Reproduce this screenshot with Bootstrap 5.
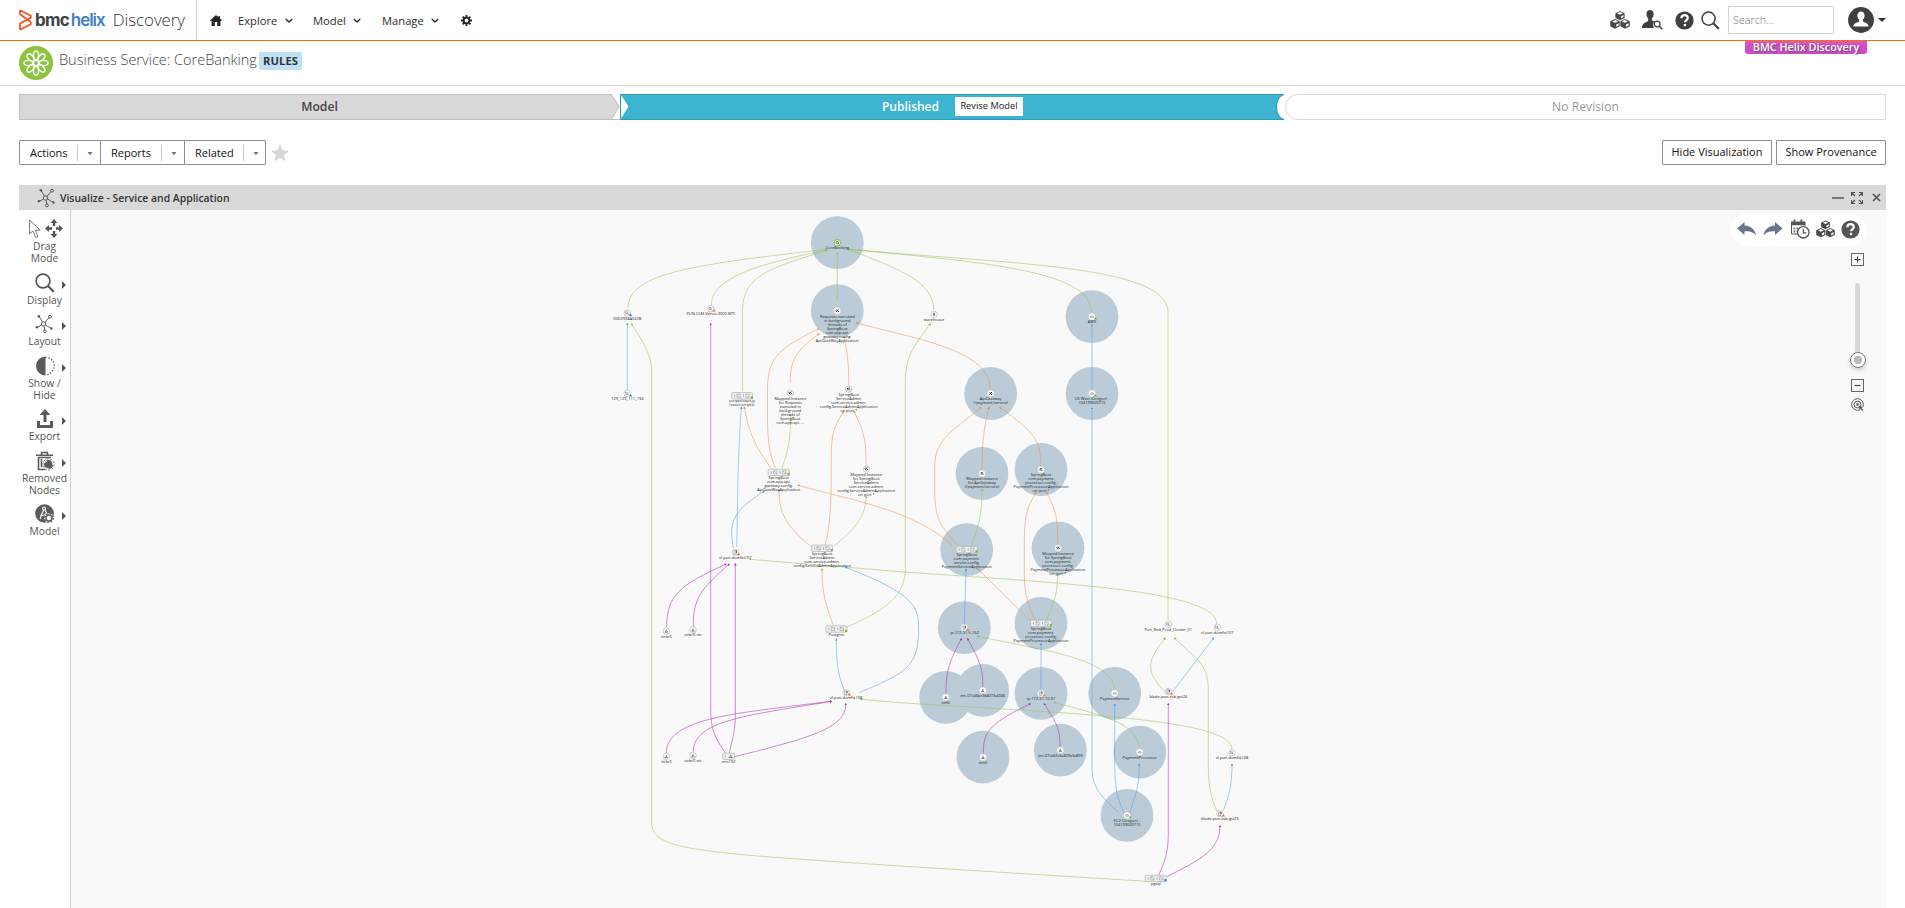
<!DOCTYPE html>
<html lang="en">
<head>
<meta charset="utf-8">
<title>BMC Helix Discovery</title>
<link href="https://cdn.jsdelivr.net/npm/bootstrap@5.3.0/dist/css/bootstrap.min.css" rel="stylesheet">
<style>
body{font-family:"Open Sans","Noto Sans",sans-serif;font-size:11.2px;line-height:1.5;color:#2d2d2d;background:#fff;height:908px;overflow:hidden}
svg{display:block;flex:none}
.topbar{height:41px;border-bottom:1px solid #f2700f}
.brand{width:197px;height:40px;padding-left:19px;border-right:1px solid #d5d5d5}
.logo-a{font:700 17px/24px "Inter","Open Sans",sans-serif;letter-spacing:-.8px;color:#414042;margin-left:2px}
.logo-b{font:600 17px/24px "Inter","Open Sans",sans-serif;letter-spacing:-1.05px;color:#4480c4;margin-left:2px}
.logo-c{font-weight:300;font-size:16.8px;line-height:24px;color:#333;margin-left:8px}
.menu-item{height:40px;padding-top:2px}
.search-box{width:106px;height:28px;border:1px solid #d5d5d5;border-radius:1px;font-size:10.800px;font-weight:300;color:#777;padding:0 4px}
.titlebar{height:45px;border-bottom:1px solid #d9d9d9;padding:5px 19px 0}
.page-title{font-size:14.5px;font-weight:300;line-height:20px;width:198px;white-space:nowrap;color:#444;margin:4px 0 0 6px}
.rule-tag{background:#bfe0f5;color:#333;font-weight:700;font-size:11.300px;line-height:18px;height:18px;width:43px;border-radius:2px;margin:6px 0 0 2px;text-align:center}
.env-tag{right:38px;top:41px;width:122px;height:13px;background:linear-gradient(#e05fae,#d24bcb 35%);color:#fff;font-weight:600;font-size:10.800px;line-height:12px;border-radius:0 0 3px 3px;text-shadow:1px 1px 2px #555}
.stages{margin:8px 19px 0;height:26px}
.stage-model{width:601px;font-size:12.200px;font-weight:600;color:#444}
.stage-pub{width:665px;font-size:12px;font-weight:600;color:#fff;gap:16px}
.stage-none{flex:1;border:1px solid #d9d9d9;border-radius:14px 0 0 14px;color:#999;font-size:12.200px}
.revise{background:#fff;color:#222;font-size:9.300px;font-weight:400;line-height:18px;height:19px;width:68px;top:-.5px;border-radius:1px;text-align:center}
.actions{margin:20px 19px 0;height:25px}
.tool-btn{height:25px;border:1px solid #8c8c8c;border-radius:1px;background:#fff;color:#111;font-size:11px;line-height:22px}
.split{border-left:1px solid #c4c4c4;width:24px;height:16px;margin-right:-5px;padding:2px 0 0 9px}
.drop-btn{padding:0 0 0 10px}
.panel-head{margin:20px 19px 0;height:25px;background:#d9d9d9;font-size:10.400px;font-weight:600;color:#333;padding:0 5px 0 18px}
.panel-main{margin:0 19px;height:698px}
.sidebar{width:52px;border-right:1px solid #d0d0d0;padding-top:9px;gap:8.5px}
.side-item{width:51px;text-align:center;font-size:10.300px;line-height:12px;color:#555;white-space:nowrap}
.side-icon{height:21px;position:relative}
.side-icon .fly{position:absolute;right:4px;top:8px}
.canvas{background:#f9f9f9;flex:1}
.node-text{font-family:"Open Sans","Noto Sans",sans-serif;font-size:3.95px;fill:#222;text-anchor:middle}
.tool-pill{right:19px;top:4px;width:136px;height:32px;border-radius:16px;background:#fff}
.zoom-col{right:20px;top:43px;width:17px}
.zoom-box{width:13px;height:13px;border:1px solid #666}
.zoom-track{width:5px;height:70px;border-radius:3px;background:#d9d9d9;margin-top:17px}
.zoom-knob{width:16px;height:16px;border:1px solid #70758a;border-radius:50%;background:radial-gradient(circle,#bbb 0 4px,#fff 4.5px);margin-top:-1px;box-shadow:0 2px 4px #ccc}
</style>
</head>
<body>
<svg width="0" height="0" class="position-absolute">
  <symbol id="i-cubes" viewBox="0 0 20 18"><g fill="#4a4a4a"><path d="M10 0l4.600 2.200v4.800L10 9.300 5.400 7V2.200z"/><path d="M5 8l4.700 2.200v5L5 17.800.2 15.200v-5z"/><path d="M15 8l4.800 2.200v5L15 17.800l-4.700-2.600v-5z"/></g><path d="M10 1l3 1.300L10 3.700 7 2.300zM5.200 9.100l3 1.300-3 1.400-3-1.400zM14.800 9.100l3 1.300-3 1.400-3-1.400zM11 5.200l2.500-1.200v2l-2.500 1.300zM6.200 13.400l2.500-1.200v2.200l-2.500 1.400zM16 13.400l2.500-1.200v2.200L16 15.800z" fill="#fff"/></symbol>
  <symbol id="i-help" viewBox="0 0 20 20"><circle cx="10" cy="10" r="9.600" fill="currentColor"/><path d="M6.700 7.600C6.800 5.400 8 4.400 10 4.400s3.400 1.100 3.400 2.900c0 2.400-2.800 2.500-2.800 4.500" fill="none" stroke="#fff" stroke-width="2.300"/><circle cx="10.500" cy="14.800" r="1.400" fill="#fff"/></symbol>
  <symbol id="i-search" viewBox="0 0 20 20"><circle cx="8" cy="8" r="6.900" fill="none" stroke="currentColor" stroke-width="1.600"/><path d="M12.800 12.800l6 6" stroke="currentColor" stroke-width="2.200"/></symbol>
  <symbol id="i-graph" viewBox="0 0 20 20"><g fill="none" stroke="currentColor" stroke-width="1"><circle cx="9" cy="10" r="2.300"/><path d="M4.500 2.500L8 8M10.500 8.300l4.300-5M6.800 11.300L3 13M11 11l5.500 3.300M9.500 12.300l.8 4"/><circle cx="15.800" cy="2.300" r="1.500"/><circle cx="10.500" cy="17.800" r="1.500"/></g><g fill="currentColor"><circle cx="4" cy="1.900" r="1.300"/><circle cx="2" cy="13.300" r="1.300"/><circle cx="17.300" cy="14.800" r="1.300"/></g></symbol>
  <symbol id="i-chev" viewBox="0 0 8 6"><path d="M.8 1l3.200 3 3.200-3" fill="none" stroke="#333" stroke-width="1.600"/></symbol>
  <symbol id="i-caret" viewBox="0 0 6 4"><path d="M.5 0h5L3 3.300z" fill="currentColor"/></symbol>
  <symbol id="i-fly" viewBox="0 0 4 8"><path d="M0 0l4 4-4 4z" fill="#555"/></symbol>
</svg>

<nav class="topbar d-flex align-items-center position-relative">
  <div class="brand d-flex align-items-center">
    <svg width="14" height="22" viewBox="0 0 14 22" fill="none" stroke="#f4511e" stroke-width="1.700" stroke-linejoin="round"><path d="M1 1.200l10.800 5.600v2L1 14.600M1 1.200v4L11.800 13M1 20.800l10.800-5.600V13M1 20.800v-6.200L11.800 8.500"/></svg>
    <span class="logo-a">bmc</span><span class="logo-b">helix</span><span class="logo-c">Discovery</span>
  </div>
  <svg style="margin-left:13px" width="12" height="11" viewBox="0 0 12 11"><path d="M6 0L0 5.500l1 .8.600-.5V11h3.200V7h2.400v4h3.200V5.800l.6.500 1-.8-2-1.900V1H8.500v1.300z" fill="#222"/></svg>
  <div class="menu-item d-flex align-items-center" style="margin-left:16px;width:75px"><span style="width:47px">Explore</span><svg width="8" height="6"><use href="#i-chev"/></svg></div>
  <div class="menu-item d-flex align-items-center" style="width:69px"><span style="width:40px">Model</span><svg width="8" height="6"><use href="#i-chev"/></svg></div>
  <div class="menu-item d-flex align-items-center" style="width:79px"><span style="width:49px">Manage</span><svg width="8" height="6"><use href="#i-chev"/></svg></div>
  <svg width="11" height="11" viewBox="0 0 12 12"><circle cx="6" cy="6" r="3.200" fill="none" stroke="#222" stroke-width="2.200"/><path d="M6 0v2M6 10v2M0 6h2M10 6h2M1.800 1.800l1.400 1.400M8.800 8.800l1.400 1.400M10.200 1.800L8.800 3.200M3.200 8.800l-1.400 1.400" stroke="#222" stroke-width="2"/></svg>
  <div class="ms-auto d-flex align-items-center" style="margin-right:19px;color:#3f3f3f">
    <svg width="20" height="18"><use href="#i-cubes"/></svg>
    <svg style="margin-left:12px" width="21" height="20" viewBox="0 0 21 20"><path d="M8 0C5.800 0 4.500 1.600 4.500 4c0 1.800.6 3.400 1.700 4.500v2.200C5.500 12.500 0 12 0 18h12c-1.500-2-1.200-5 .8-6.500-1.500-.5-2.600-.6-2.900-1.200V8.500c1.100-1.100 1.700-2.700 1.700-4.500C11.600 1.600 10.300 0 8 0z" fill="#3f3f3f"/><circle cx="15.200" cy="14" r="2.900" fill="#fff" stroke="#3f3f3f" stroke-width="1.200"/><path d="M17.300 16.200l3 3" stroke="#3f3f3f" stroke-width="1.500"/></svg>
    <svg style="margin-left:12px" width="19" height="19"><use href="#i-help"/></svg>
    <svg style="margin-left:7px" width="19" height="19"><use href="#i-search"/></svg>
    <div class="search-box d-flex align-items-center" style="margin-left:8px">Search...</div>
    <svg style="margin-left:14px" width="26" height="26" viewBox="0 0 26 26"><circle cx="13" cy="13" r="12.900" fill="#3f3f3f"/><path d="M13 4.500c-2.300 0-3.600 1.700-3.600 4 0 1.700.7 3 1.700 4v1.800C10.200 16 5.500 15.500 5.300 19.500h15.400c-.2-4-4.900-3.500-5.800-5.200v-1.800c1-1 1.700-2.300 1.700-4 0-2.300-1.300-4-3.600-4z" fill="#fff"/></svg>
    <svg style="margin-left:4px" width="8" height="4" viewBox="0 0 6 4" preserveAspectRatio="none"><path d="M0 0h6L3 4z" fill="#333"/></svg>
  </div>
  <div class="env-tag position-absolute text-center">BMC Helix Discovery</div>
</nav>

<header class="titlebar d-flex align-items-start">
  <svg width="34" height="34" viewBox="0 0 34 34"><circle cx="17" cy="17" r="17" fill="#8bc53f"/><g fill="none" stroke="#fff" stroke-width="1.400" id="petals"></g><circle cx="17" cy="17" r="2.800" fill="none" stroke="#fff" stroke-width="1.800"/></svg>
  <h1 class="page-title">Business Service: CoreBanking</h1>
  <span class="rule-tag">RULES</span>
</header>

<section class="stages d-flex">
  <div class="stage-model position-relative d-flex align-items-center justify-content-center">
    <svg class="position-absolute top-0 start-0" width="601" height="26" viewBox="0 0 601 26"><path d="M.5.500H592.500L600 12.500 592.500 25.500H.5z" fill="#d9d9d9" stroke="#bdbdbd"/><path d="M592 25.500h9" stroke="#bdbdbd"/></svg>
    <span class="position-relative">Model</span>
  </div>
  <div class="stage-pub position-relative d-flex align-items-center justify-content-center">
    <svg class="position-absolute top-0 start-0" width="665" height="26" viewBox="0 0 665 26"><path d="M.5.500H664C654 4 654 22 664 25.500H.5z" fill="#3db5d0" stroke="#2a9ab5"/><path d="M1 1l7.500 11.500L1 24.500z" fill="#fff"/></svg>
    <span class="position-relative">Published</span><span class="revise position-relative">Revise Model</span>
  </div>
  <div class="stage-none d-flex align-items-center justify-content-center">No Revision</div>
</section>

<section class="actions d-flex align-items-center">
  <div class="tool-btn drop-btn d-flex align-items-center" style="width:82px"><span style="width:47px">Actions</span><span class="split text-secondary"><svg width="6" height="10" viewBox="0 -5 6 10"><use href="#i-caret" width="6" height="4"/></svg></span></div>
  <div class="tool-btn drop-btn d-flex align-items-center" style="width:85px;margin-left:-1px"><span style="width:50px">Reports</span><span class="split text-secondary"><svg width="6" height="10" viewBox="0 -5 6 10"><use href="#i-caret" width="6" height="4"/></svg></span></div>
  <div class="tool-btn drop-btn d-flex align-items-center" style="width:82px;margin-left:-1px"><span style="width:48px">Related</span><span class="split text-secondary"><svg width="6" height="10" viewBox="0 -5 6 10"><use href="#i-caret" width="6" height="4"/></svg></span></div>
  <svg style="margin-left:5px" width="18" height="18" viewBox="0 0 18 18"><path d="M9 0l2.500 6.200 6.500.5-5 4.200 1.600 6.700L9 14l-5.600 3.600L5 10.900 0 6.700l6.500-.5z" fill="#d6d6d6"/></svg>
  <div class="tool-btn ms-auto text-center" style="width:110px">Hide Visualization</div>
  <div class="tool-btn text-center" style="width:110px;margin-left:4px">Show Provenance</div>
</section>

<section class="panel-head d-flex align-items-center">
  <svg width="19" height="20" style="color:#555"><use href="#i-graph"/></svg><span style="margin-left:4px;padding-top:2px">Visualize - Service and Application</span>
  <div class="ms-auto d-flex align-items-center" style="color:#4b4b4b">
    <svg width="12" height="2"><path d="M0 1h12" stroke="#555" stroke-width="1.500"/></svg>
    <svg style="margin-left:7px" width="12" height="12" viewBox="0 0 12 12"><path d="M.5 4V.500H4M8 .5h3.500V4M11.500 8v3.500H8M4 11.500H.5V8M.5.500l3.500 3.500M11.500.500L8 4M11.500 11.500L8 8M.5 11.500L4 8" stroke="#555" stroke-width="1.200" fill="none"/></svg>
    <svg style="margin-left:9px" width="9" height="9" viewBox="0 0 9 9"><path d="M1 1l7 7M8 1L1 8" stroke="#555" stroke-width="1.700"/></svg>
  </div>
</section>

<main class="panel-main d-flex">
  <aside class="sidebar d-flex flex-column" style="color:#5a5a5a">
    <div class="side-item"><div class="side-icon d-flex" style="padding-left:10px">
      <svg width="12" height="20" viewBox="0 0 12 20"><path d="M.6 1v14l3.300-3 2.600 6.500 2.500-1-2.700-6.300h4.900z" fill="#fff" stroke="#777"/></svg>
      <svg style="margin-left:4px" width="18" height="19" viewBox="0 0 18 19"><g fill="#555"><path d="M9 0l3.500 4h-2.300v3H7.800V4H5.500zM9 19l-3.500-4h2.300v-3h2.400v3h2.300zM0 9.500L4 6v2.300h3v2.400H4V13zM18 9.500L14 13v-2.300h-3V8.300h3V6z"/></g></svg></div>Drag<br>Mode</div>
    <div class="side-item"><div class="side-icon d-flex justify-content-center"><svg width="20" height="20"><use href="#i-search"/></svg><svg class="fly" width="4" height="8"><use href="#i-fly"/></svg></div>Display</div>
    <div class="side-item"><div class="side-icon d-flex justify-content-center"><svg width="19" height="20"><use href="#i-graph"/></svg><svg class="fly" width="4" height="8"><use href="#i-fly"/></svg></div>Layout</div>
    <div class="side-item"><div class="side-icon d-flex justify-content-center"><svg width="20" height="20" viewBox="0 0 20 20"><path d="M10.500.500a9.500 9.500 0 0 0 0 19z" fill="#5a5a5a"/><path d="M10.500 1.300a8.700 8.700 0 0 1 0 17.400" fill="none" stroke="#5a5a5a" stroke-width="1.300" stroke-dasharray="1.300 1.700"/></svg><svg class="fly" width="4" height="8"><use href="#i-fly"/></svg></div>Show /<br>Hide</div>
    <div class="side-item"><div class="side-icon d-flex justify-content-center"><svg width="18" height="20" viewBox="0 0 18 20"><path d="M9 0l5.500 6H10.500v7h-3V6H3.500zM1 12h3v4h10v-4h3v7H1z" fill="#5a5a5a"/></svg><svg class="fly" width="4" height="8"><use href="#i-fly"/></svg></div>Export</div>
    <div class="side-item"><div class="side-icon d-flex justify-content-center"><svg width="20" height="20" viewBox="0 0 20 20"><path d="M1 4.200h17M6.500 4V1.500h6V4M3 6.500h13M3.500 6v12.500H10M6.500 8v8" fill="none" stroke="#5a5a5a" stroke-width="1.600"/><circle cx="13.500" cy="13.500" r="5" fill="#5a5a5a" stroke="#fff"/><path d="M9 12l3-2M17 10l1 4M10.500 17l3 .5M8 8l2 1" stroke="#fff" stroke-width="1"/><circle cx="13.500" cy="13.500" r="5.700" fill="none" stroke="#5a5a5a" stroke-width=".8" stroke-dasharray="2 1.500"/></svg><svg class="fly" width="4" height="8"><use href="#i-fly"/></svg></div>Removed<br>Nodes</div>
    <div class="side-item"><div class="side-icon d-flex justify-content-center"><svg width="20" height="20" viewBox="0 0 20 20"><circle cx="9.500" cy="9.500" r="9.300" fill="#5a5a5a"/><g fill="none" stroke="#fff" stroke-width="1.100"><circle cx="9" cy="4.500" r="1.500"/><path d="M8.500 6L5 15M9.800 6l3 5M5.500 11c2 1 4 .5 6-2"/></g><circle cx="14" cy="14" r="4.800" fill="#fff"/><circle cx="14" cy="14" r="3" fill="none" stroke="#5a5a5a" stroke-width="1.400"/><circle cx="14" cy="14" r="4.300" fill="none" stroke="#5a5a5a" stroke-width="1.400" stroke-dasharray="1.700 1.680"/></svg><svg class="fly" width="4" height="8"><use href="#i-fly"/></svg></div>Model</div>
  </aside>
  <div class="canvas position-relative">
    <svg id="graph" width="1815" height="698" viewBox="71 210 1815 698">
      <g id="halos" fill="#bbccd8"></g><g id="edges" fill="none"></g><g id="nodes"></g>
    </svg>
    <div class="tool-pill position-absolute">
      <div class="d-flex align-items-center" style="height:30px;padding-left:6px;color:#555">
        <svg width="19" height="14" viewBox="0 0 19 14"><path d="M7.500 0v3.500C14 4 18 7.500 19 13.500 16 9.800 12.500 9.300 7.500 9.300V13L0 6.500z" fill="#6d738b"/></svg>
        <svg style="margin-left:7px" width="20" height="14" viewBox="0 0 19 14"><path d="M11.500 0v3.500C5 4 1 7.500 0 13.500 3 9.800 6.500 9.300 11.500 9.300V13L19 6.500z" fill="#6d738b"/></svg>
        <svg style="margin-left:7px" width="20" height="20" viewBox="0 0 20 20"><path d="M1 2.500h14v3.800H1zM3.500.500h1.800v3H3.500zM10.500.500h1.800v3h-1.800z" fill="#555"/><path d="M1.500 3v12H8M15 3v4" fill="none" stroke="#555"/><path d="M3.500 9.500h8M3.500 12.500h5" stroke="#777" stroke-width="1.800" stroke-dasharray="1.800 1.200"/><circle cx="13.300" cy="13.300" r="5.700" fill="#fff" stroke="#555" stroke-width="1.300"/><path d="M13.300 9.800v4h3" fill="none" stroke="#555" stroke-width="1.200"/></svg>
        <svg style="margin-left:6px" width="19" height="18"><use href="#i-cubes"/></svg>
        <svg style="margin-left:6px" width="19" height="19"><use href="#i-help"/></svg>
      </div>
    </div>
    <div class="zoom-col position-absolute d-flex flex-column align-items-center">
      <svg class="zoom-box" viewBox="0 0 11 11"><path d="M5.500 2.500v6M2.500 5.500h6" stroke="#444" stroke-width="1.200"/></svg>
      <div class="zoom-track"></div>
      <div class="zoom-knob"></div>
      <svg class="zoom-box" style="margin-top:11px" viewBox="0 0 11 11"><path d="M2.500 5.500h6" stroke="#444" stroke-width="1.200"/></svg>
      <svg style="margin-top:6px" width="13" height="13" viewBox="0 0 13 13"><g fill="none" stroke="#555"><circle cx="6.500" cy="6.500" r="5.800"/><circle cx="6.500" cy="6.500" r="3.400"/></g><circle cx="6.500" cy="6.500" r="1.300" fill="#555"/><path d="M7 7l5.500 2-2 .7 2 2.300-1 1-2.200-2.200L8.500 13z" fill="#444" stroke="#f9f9f9" stroke-width=".5"/></svg>
    </div>
  </div>
</main>

<script src="https://cdn.jsdelivr.net/npm/bootstrap@5.3.0/dist/js/bootstrap.bundle.min.js"></script>
<script>
// Atom emblem: eight petals around the centre
let petals = '';
for (let a = 0; a < 360; a += 45) petals += `<ellipse cx="17" cy="9.600" rx="2.600" ry="4.600" transform="rotate(${a} 17 17)"/>`;
document.getElementById('petals').innerHTML = petals;

// Node: x, y, kind, halo, badge colour, label lines (| separated), first label offset
const G = '#76b82a', O = '#f26a1b', B = '#1c7fd6';
const nodes = [
 [837.3,242.700,'root',1,'','CoreBanking',5.3],
 [837.3,310.700,'link',1,'','Requests executed|in background|threads of|SpringBoot|com.app.api.|gateway.config.|ApiGateWayApplication',6],
 [627.3,313,'vm',0,B,'00D2958A022B',5.6],
 [710.7,308.700,'vm',0,O,'PUN-CLM-Venus-3000-WTI',5],
 [934,314.300,'db',0,'','warehouse',5.4],
 [627.3,393.500,'vm',0,B,'129_129_111_194',5],
 [742,395.700,'group',0,G,'scripts/start.js|(react-scripts)',5.3],
 [790.3,393,'link',0,'','Mapped Instance|for Requests|executed in|background|threads of|SpringBoot|com.app.api. ...',6],
 [848.7,389,'link',0,'','SpringBoot|ServiceAdmin|com.service.admin.|config.ServiceAdminApplication|on port *',5.6],
 [1092,316.700,'cloud',1,G,'AWS',5],
 [1092,393.500,'cloud',1,G,'US West (Oregon) -|154199600715',5.5],
 [990.7,393.500,'link',1,'','ApiGateway|(/payment/service)',5.5],
 [982,473.500,'link',1,'','Mapped Instance|for ApiGateway|(/payment/service)',5.2],
 [1041,469.500,'link',1,'','SpringBoot|com.payment.|processor.config.|PaymentProcessorApplication|on port *',5.3],
 [778.7,472.400,'group',0,G,'SpringBoot|com.app.api.|gateway.config.|ApiGateWayApplication',5.3],
 [866.3,469,'link',0,'','Mapped Instance|for SpringBoot|ServiceAdmin|com.service.admin.|config.ServiceAdminApplication|on port *',5.6],
 [735.3,552.300,'host',0,O,'vl-pun-domfst107',5.3],
 [822,548.300,'group',0,G,'SpringBoot|ServiceAdmin|com.service.admin.|config.ServiceAdminApplication',5.3],
 [666.3,631,'net',0,'','virbr0',5.6],
 [693,630,'net',0,'','virbr0-nic',5],
 [836.3,629,'group',0,G,'Postgres',5.7],
 [966.7,549.600,'group',1,G,'SpringBoot|com.payment.|service.config.|PaymentServiceApplication',5.3],
 [1058,548,'link',1,'','Mapped Instance|for SpringBoot|com.payment.|processor.config.|PaymentProcessorApplication|on port *',6],
 [964.3,627.700,'host',1,O,'ip-172-31-5-162',5],
 [1041,623.400,'group',1,G,'SpringBoot|com.payment.|processor.config.|PaymentProcessorApplication',5.6],
 [945.7,697.300,'net',1,'','eth0',5.4],
 [982.7,690.400,'net',1,'','eni-07c46bc9b827b4346',5.3],
 [1041,693.400,'host',1,O,'ip-172-31-10-91',5.3],
 [1114.7,693.300,'cloud',1,'','PaymentService',5.4],
 [1168.3,624.300,'vm',0,'','Pun_Red_Prod_Cluster_01',5.5],
 [1217.3,627.300,'vm',0,'','vl-pun-domfst107',5.4],
 [1168.3,691.500,'host',0,O,'blade-pun-esb-gst24',5.2],
 [846,692.700,'host',0,O,'vl-pun-domfst108',5.4],
 [666.3,756.500,'net',0,'','virbr0',5.300],
 [693,755.700,'net',0,'','virbr0-nic',5.2],
 [728.7,756.400,'mini',0,'','ens192',5.3],
 [983,757.200,'net',1,'','eth0',5.300],
 [1060.3,750.200,'net',1,'','eni-07cb6fc4a829efa899',5.6],
 [1139.7,752.100,'cloud',1,'','PaymentProcessor',5.6],
 [1232,752.500,'vm',0,'','vl-pun-domfst108',5.3],
 [1127,815.400,'cloud',1,G,'EC2 (Oregon) -|154199600715',5.3],
 [1220,813.700,'host',0,O,'blade-pun-esb-gst23',5.3],
 [1155.7,878.400,'group',0,B,'pgsql',5.4]
];
const colors = {g:'#93bf4e', o:'#f08c46', b:'#4a97ee', p:'#a533ac', c:'#2bb5b5'};
const edges = [
 'g M826.7 249.300C700 264 628 272 628 308','g M826.7 250C770 262 711.300 275 711.300 305','g M826.7 250.500C770 268 743.300 275 742.500 310V391',
 'g M837.300 253V300','g M848.300 249.300C895 268 933.700 280 933.700 310','g M848.300 249.300C980 262 1091.500 270 1091.500 312','g M848.300 249C1000 264 1168 264 1168 312V620',
 'c M627.300 324V390','g M631.500 324C645 345 651.700 355 651.700 373V822C651.700 850 690 852 900 866L1146 881.300',
 'p M710.700 324V710C711 730 714 736 725.300 753','g M930 324.300C912 348 905.700 358 905.400 380V570C904 600 880 612 847 627',
 'o M818.300 329C775 350 767.700 360 767.500 390V420C768 445 770 455 775.300 468.300','o M818.700 334C795 352 790.300 360 790.300 382.700','o M844 337C848 355 848.700 365 848.700 385','o M857 323C920 340 990 350 990.300 390',
 'b M741.300 407.500C737 470 738 500 736.700 547','o M744.300 407.500C750 440 760 452 771.300 468.300','g M790.300 415C791 440 788 450 782 468',
 'o M843.300 412C833 428 831.500 435 831.300 455C831.300 500 831 520 825.300 545','o M854.300 412C866 435 866 445 866 465','g M866 496.700C866 520 850 532 834.300 546',
 'o M798.300 485.300C850 500 915 510 952.700 546','b M764 491.300C735 510 728 520 733.500 548','o M779 490C779 518 790 528 810.700 546.700',
 'g M750 559.300L900 571.700C1060 583 1216.700 590 1216.700 624','b M845.700 567.300C890 585 918 598 918.500 622C920 667 908 672 859 692.700','o M822 569.300C822 595 826 605 833.300 625',
 'p M725.700 564.300C680 585 666.700 595 666.700 627','p M729 564.300C700 590 693.300 598 693.300 627','p M735.300 564.300V715C735.300 732 732 740 729.300 753','b M836.300 639.300C836.500 665 838 675 844.300 690',
 'p M831 701.300C740 713 666.500 717 666.300 753','p M831 701.500C740 716 693.300 722 693.300 752','p M845.700 704C846 728 810 738 734.300 756.700','g M861 699.300L900 702.700C1060 713 1232 718 1232 749',
 'o M980.700 407.700C950 433 935 440 934.700 466.700V490C935 520 940 525 958 546','o M989 407.700C983 430 982.300 445 982 470','o M1000 407.500C1035 433 1040.700 440 1040.700 466','g M982 489.500C982 515 979 525 971.300 546.700',
 'o M1036 492.500C1025 510 1024.500 520 1024.300 545V575C1024.500 595 1028 605 1035 620','o M1046.700 492.500C1057 512 1057.700 520 1057.700 545','g M1057.700 575C1057 600 1052 605 1046.700 620','o M978.300 569.300L1030 620.700','b M966 569.500L964.300 625',
 'p M961.300 639C947 665 946 675 946 694','p M967.700 639C982 665 982.700 670 982.700 687','g M977.700 636.300C1040 650 1114 658 1114.300 690','b M1041 644V690','b M1092 325V390',
 'b M1092 408V770C1092.500 790 1105 800 1119 812.700','b M1114.700 704.500V765C1115 790 1118 800 1124 812.700','b M1139.300 764.500C1139 790 1135 795 1130 812.700',
 'g M1165 638.300C1148 660 1144 670 1165 692','g M1174.700 638.300C1200 662 1208 665 1208.300 690V765C1208.500 790 1212 800 1217.300 811.700','b M1213.300 638.300L1172.700 691.700',
 'p M1168.300 704V835C1168 855 1164 863 1158.700 875','b M1232 764.500C1232 790 1227 800 1223.300 810.700','p M1220 826C1220 850 1200 860 1166.700 876.700',
 'p M1030 704C985 725 983.500 735 983.300 754','p M1044.300 704C1058 725 1060 730 1060 747','g M1054.700 702.500C1100 715 1138 722 1139.300 749'
];
let defs = '<defs>', eo = '';
for (const k in colors) defs += `<marker id="m-${k}" viewBox="0 0 4 4" refX="2" refY="2" markerWidth="2.600" markerHeight="2.600" markerUnits="userSpaceOnUse" orient="auto-start-reverse"><path d="M0 0l4 2-4 2z" fill="${colors[k]}"/></marker>`;
for (const e of edges) {
  const k = e[0];
  eo += `<path d="${e.slice(2)}" stroke="${colors[k]}" stroke-width="1" stroke-opacity="${k === 'p' ? .55 : .5}" marker-start="url(#m-${k})"/>`;
}
document.getElementById('edges').innerHTML = defs + '</defs>' + eo;

const glyph = {
 root:'<circle r="3.100" fill="#fff" stroke="#8bc53f" stroke-width="1.100"/><circle r="1.300" fill="none" stroke="#555" stroke-width=".8"/>',
 link:'<path d="M-1.300 1.100l2.500-2.400M-1.600-.1l1.200-1.200M.4 1.400l1.200-1.200" stroke="#333" stroke-width="1" fill="none"/>',
 vm:'<path d="M-1.600-1.200h2v2h-2zM-.4.400l2 1.200" stroke="#777" stroke-width=".6" fill="none"/>',
 db:'<path d="M-.9-1.500h1.800v3h-1.800z" fill="#777"/>',
 cloud:'<path d="M-1.500.700q0-1.500 1.200-1.500 1.800-.500 1.900 1.500z" stroke="#777" stroke-width=".6" fill="none"/>',
 host:'<path d="M-1.300-1.700h2.300v3.500h-2.300z" stroke="#777" stroke-width=".5" fill="#eee"/><path d="M1-1.700v2" stroke="#222" stroke-width=".8"/>',
 net:'<path d="M-1.500 1.200h3M0-1.500v1.500M-1.300 1L0-.3 1.300 1" stroke="#555" stroke-width=".7" fill="none"/>'
};
let h = '', n = '';
for (const [x, y, kind, halo, badge, label, off] of nodes) {
  if (halo) h += `<circle cx="${x}" cy="${y}" r="26.400"/>`;
  n += `<g transform="translate(${x} ${y})">`;
  if (kind === 'group' || kind === 'mini') {
    const w = kind === 'group' ? 21 : 12;
    n += `<rect x="${-w / 2}" y="-3.200" width="${w}" height="6.400" rx="1.200" fill="#eee" stroke="#aaa" stroke-width=".6"/>`;
    n += kind === 'group'
      ? '<path d="M-7.500-1.300v2.600M1.500-1.300v2.600" stroke="#4aa5b0" stroke-width=".6"/><path d="M-5-1.600h3.200v3.200h-3.200zM3.900-1.600h3.200v3.200H3.900zM-5-1.600l3.200 3.200M3.900-1.600l3.200 3.200" stroke="#888" stroke-width=".5" fill="#fff"/>'
      : '<path d="M-3.500-1.300v2.600" stroke="#4aa5b0" stroke-width=".6"/><path d="M0 1.300h4M2-1.600v1.500M.500 1L2-.3 3.500 1" stroke="#666" stroke-width=".8" fill="none"/>';
    if (badge) n += `<rect x="8.700" y=".7" width="2.200" height="2.200" fill="${badge}"/>`;
  } else {
    n += `<circle r="3.200" fill="#fff" stroke="${halo ? '#ddd' : '#999'}" stroke-width=".5"/>${glyph[kind]}`;
    if (badge) n += `<path d="M1.800 2.900L3.300.6l1.700 2.300z" fill="${badge}"/>`;
  }
  label.split('|').forEach((t, i) => { n += `<text class="node-text" x="0" y="${(off + 1.400 + i * 4).toFixed(1)}">${t}</text>`; });
  n += '</g>';
}
document.getElementById('halos').innerHTML = h;
document.getElementById('nodes').innerHTML = n;
</script>
</body>
</html>
